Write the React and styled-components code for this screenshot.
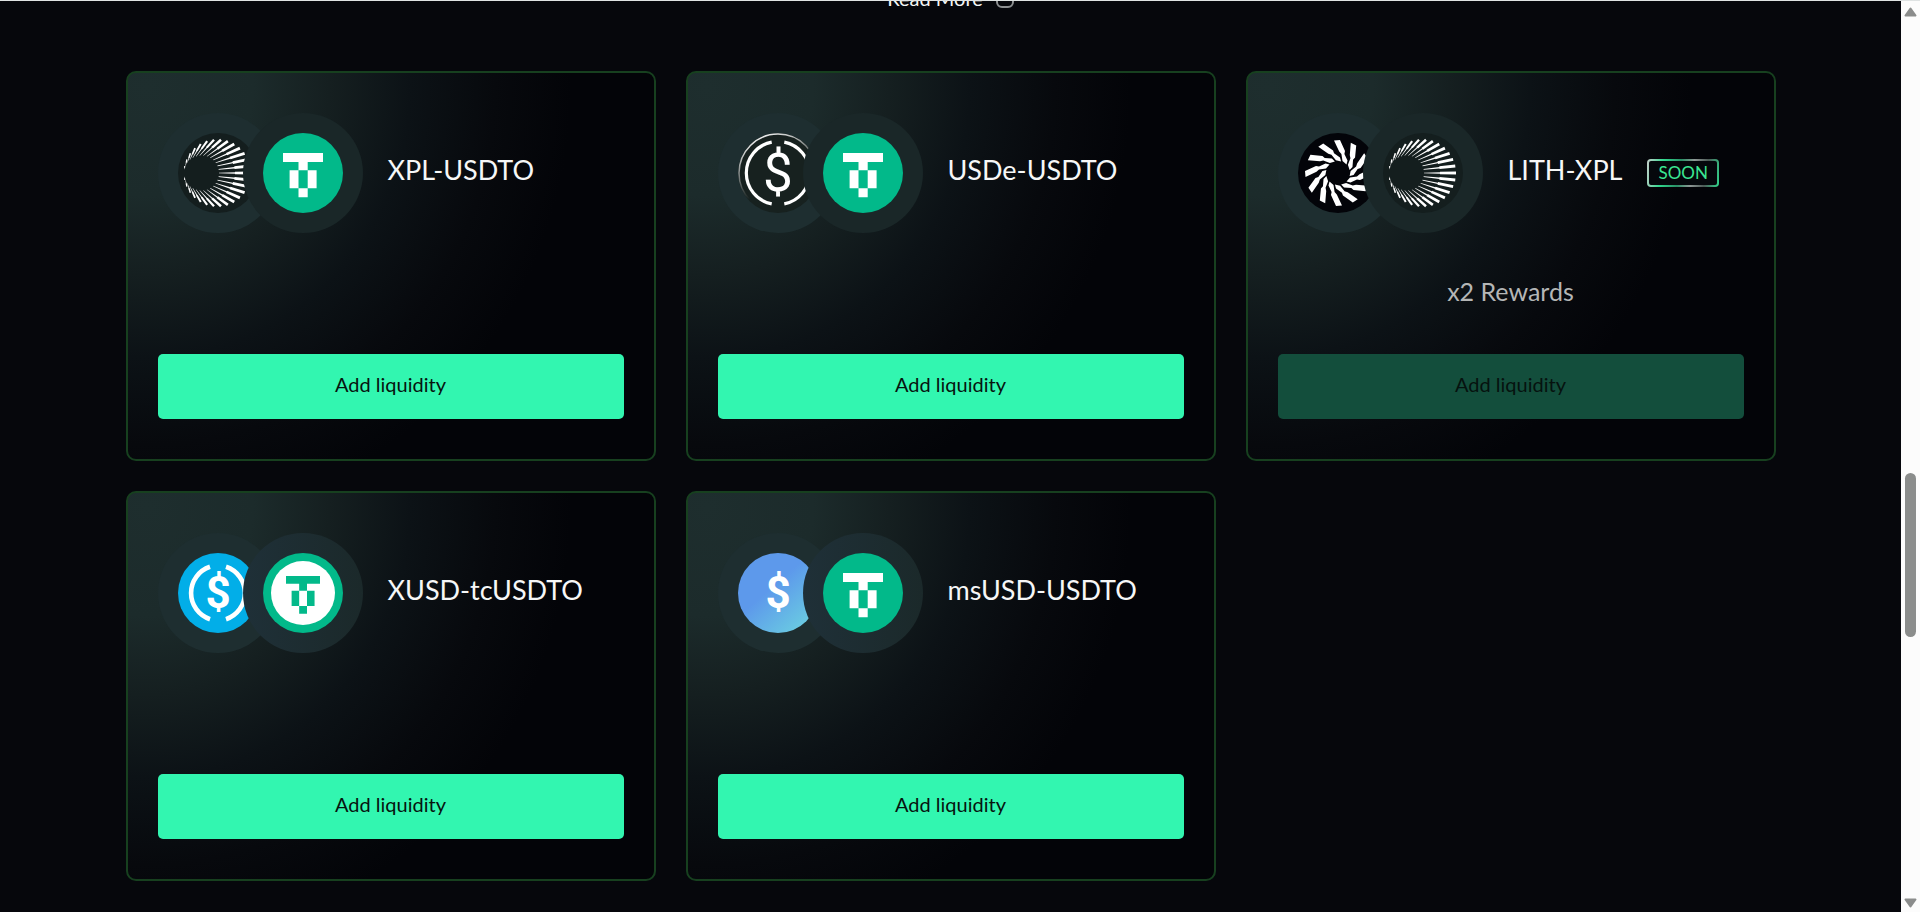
import React from "react";
import styled, { createGlobalStyle } from "styled-components";

const GlobalStyle = createGlobalStyle`
  * {
    box-sizing: border-box;
  }

  body {
    margin: 0;
    background: #06070c;
    color: #f6f7f7;
    font-family: Lato, "Open Sans", sans-serif;
  }
`;

const Screen = styled.div`
  display: grid;
  grid-template-columns: minmax(0, 1fr) 19px;
  height: 100vh;
  overflow: hidden;
  border-top: 1px solid #dfe3e3;
`;

const Content = styled.main`
  overflow: hidden;
  padding: 0 24px;
`;

const ReadMore = styled.a`
  display: flex;
  justify-content: center;
  align-items: center;
  gap: 13px;
  margin: -15px auto 60px;
  color: #f6f7f7;
  font-size: 20px;
  line-height: 25px;
  text-decoration: none;
`;

const PoolGrid = styled.section`
  display: grid;
  grid-template-columns: repeat(3, minmax(0, 1fr));
  gap: 30px;
  max-width: 1650px;
  margin: 0 auto;

  @media (max-width: 1500px) {
    grid-template-columns: repeat(2, minmax(0, 1fr));
  }

  @media (max-width: 1000px) {
    grid-template-columns: 1fr;
  }
`;

const Card = styled.article`
  display: flex;
  flex-direction: column;
  padding: 40px 30px;
  border: 2px solid #17401f;
  border-radius: 10px;
  background: radial-gradient(
      ellipse 80% 112% at 4% 4%,
      #1e2e2e 0%,
      #1c2b2b 25%,
      #151f20 43%,
      #0c1216 62%,
      #07090d 82%,
      #030408 100%
    )
    border-box;
`;

const CardHeader = styled.header`
  display: flex;
  align-items: center;
  gap: 25px;
`;

const TokenPair = styled.div`
  display: flex;
  flex-shrink: 0;
`;

const TokenRing = styled.div`
  display: flex;
  align-items: center;
  justify-content: center;
  width: 120px;
  height: 120px;
  border-radius: 50%;
  background: ${({ $tone }) => $tone};

  & + & {
    margin-left: -35px;
  }
`;

const PairName = styled.h3`
  margin: 0;
  padding-bottom: 6px;
  font-size: 27px;
  line-height: 34px;
  font-weight: 400;
  white-space: nowrap;
`;

const SoonBadge = styled.span`
  padding: 0 9px;
  border: 2px solid transparent;
  border-radius: 4px;
  background:
    linear-gradient(#05080c, #05080c) padding-box,
    linear-gradient(100deg, #c9cfcd 0%, #2fd98d 22%, #2a8f66 45%, #8f9896 62%, #4c5a56 80%, #2fd98d 100%) border-box;
  color: #3be793;
  font-size: 17px;
  line-height: 24px;
`;

const Rewards = styled.p`
  display: flex;
  align-items: center;
  justify-content: center;
  min-height: 121px;
  margin: 0;
  padding-bottom: 6px;
  color: #b4b6b6;
  font-size: 25px;
  line-height: 30px;
`;

const LiquidityButton = styled.button`
  height: 65px;
  padding: 0 20px 6px;
  border: 0;
  border-radius: 5px;
  background: #32f6b0;
  color: #07130f;
  font: 20px Lato, "Open Sans", sans-serif;
  cursor: pointer;

  &:disabled {
    background: #134e3c;
    color: #06120f;
    cursor: default;
  }
`;

const Scrollbar = styled.aside`
  display: flex;
  flex-direction: column;
  align-items: center;
  padding: 6px 0 4px;
  background: #fcfcfc;
`;

const ScrollArrow = styled.button`
  display: flex;
  padding: 0;
  border: 0;
  background: none;
`;

const Track = styled.div`
  display: grid;
  grid-template-rows: 457fr 164fr 262fr;
  flex: 1;
  width: 11px;
`;

const Thumb = styled.div`
  grid-row: 2;
  border-radius: 6px;
  background: #8b8d8c;
`;

const TokenSvg = ({ children }) => (
  <svg width="80" height="80" viewBox="0 0 80 80" aria-hidden="true">
    {children}
  </svg>
);

const RAYS = 30;

// each ray runs from the small left circle to the big outer one
const rays = Array.from({ length: RAYS }, (_, i) => {
  const a = (i * 2 * Math.PI) / RAYS;
  const x1 = 23.5 + 17.5 * Math.cos(a);
  const y1 = 40 + 17.5 * Math.sin(a);
  const x2 = 39.5 + 33.5 * Math.cos(a);
  const y2 = 40 + 33.5 * Math.sin(a);
  const length = Math.hypot(x2 - x1, y2 - y1) || 1;
  const nx = -(y2 - y1) / length;
  const ny = (x2 - x1) / length;
  const k = Math.min(1, 0.3 + length / 48);
  const at = (t, w) => `${x1 + (x2 - x1) * t + nx * w * k},${y1 + (y2 - y1) * t + ny * w * k}`;
  return [
    at(0, 0.3),
    at(0.5, 0.8),
    at(0.5, 1.4),
    at(1, 1.6),
    at(1, -1.6),
    at(0.5, -1.4),
    at(0.5, -0.8),
    at(0, -0.3),
  ].join(" ");
});

const XplIcon = () => (
  <TokenSvg>
    <circle cx="40" cy="40" r="40" fill="#141e1e" />
    {rays.map((points, i) => (
      <polygon key={i} points={points} fill="#fff" />
    ))}
  </TokenSvg>
);

const LithIcon = () => (
  <TokenSvg>
    <circle cx="40" cy="40" r="40" fill="#030409" />
    {Array.from({ length: 12 }, (_, i) => (
      <path
        key={i}
        d="M-4 -32.5L2 -33L7 -22L6.4 -19L9.5 -12.5L8.5 -8.5L4.5 -12L3.4 -19L1.2 -21.5Z"
        transform={`translate(40 40) rotate(${i * 30})`}
        fill="#fff"
      />
    ))}
  </TokenSvg>
);

const UsdtoMark = ({ color }) => (
  <path
    d="M20 20H60V29H44.7V37.3H53.6V55.3H44.7V64.3H35.5V55.3H26.6V37.3H35.5V29H20ZM35.5 37.3V55.3H44.7V37.3Z"
    fill={color}
    fillRule="evenodd"
  />
);

const UsdtoIcon = () => (
  <TokenSvg>
    <circle cx="40" cy="40" r="40" fill="#02b98a" />
    <UsdtoMark color="#fff" />
  </TokenSvg>
);

const TcUsdtoIcon = () => (
  <TokenSvg>
    <circle cx="40" cy="40" r="40" fill="#02b98a" />
    <circle cx="40" cy="40" r="32" fill="#fff" />
    <g transform="translate(6 6) scale(0.85)">
      <UsdtoMark color="#02b98a" />
    </g>
  </TokenSvg>
);

const Dollar = ({ size, y, weight }) => (
  <text
    x="40"
    y={y}
    fill="#fff"
    fontFamily="Roboto, sans-serif"
    fontSize={size}
    fontWeight={weight}
    textAnchor="middle"
  >
    $
  </text>
);

const UsdeIcon = () => (
  <TokenSvg>
    <defs>
      <linearGradient id="usde-rim" x1="0.2" y1="0" x2="0.6" y2="0.9">
        <stop offset="0" stopColor="#fff" />
        <stop offset="0.75" stopColor="#fff" stopOpacity="0" />
      </linearGradient>
    </defs>
    <circle cx="40" cy="40" r="40" fill="#17211f" />
    <circle cx="40" cy="40" r="39" fill="none" stroke="url(#usde-rim)" strokeWidth="1.5" />
    <path
      d="M33.7 9.1A31.5 31.5 0 0 0 33.7 70.9M46.3 9.1A31.5 31.5 0 0 1 46.3 70.9"
      fill="none"
      stroke="#fff"
      strokeWidth="3.2"
    />
    <Dollar size={53} y={58} weight={400} />
  </TokenSvg>
);

const XusdIcon = () => (
  <TokenSvg>
    <circle cx="40" cy="40" r="40" fill="#02aee8" />
    <path
      d="M32 13.8A27.6 27.6 0 0 0 32 66.2M48 13.8A27.6 27.6 0 0 1 48 66.2"
      fill="none"
      stroke="#fff"
      strokeWidth="4.6"
    />
    <Dollar size={44} y={55} weight={700} />
  </TokenSvg>
);

const MsUsdIcon = () => (
  <TokenSvg>
    <defs>
      <linearGradient id="msusd-fill" x1="0.15" y1="0.1" x2="0.85" y2="0.9">
        <stop offset="0.4" stopColor="#5d99eb" />
        <stop offset="1" stopColor="#6acbe2" />
      </linearGradient>
    </defs>
    <circle cx="40" cy="40" r="40" fill="url(#msusd-fill)" />
    <Dollar size={44} y={55} weight={700} />
  </TokenSvg>
);

const LIGHT = "linear-gradient(90deg, #1f3038, #1b292a)";
const BASE = "#1e2e30";
const DIM = "#1a2728";

const pools = [
  { name: "XPL-USDTO", icons: [XplIcon, UsdtoIcon], tones: [BASE, DIM] },
  { name: "USDe-USDTO", icons: [UsdeIcon, UsdtoIcon], tones: [BASE, DIM] },
  { name: "LITH-XPL", icons: [LithIcon, XplIcon], tones: [BASE, DIM], soon: true, rewards: "x2 Rewards" },
  { name: "XUSD-tcUSDTO", icons: [XusdIcon, TcUsdtoIcon], tones: [BASE, LIGHT] },
  { name: "msUSD-USDTO", icons: [MsUsdIcon, UsdtoIcon], tones: [BASE, LIGHT] },
];

const PoolCard = ({ pool }) => (
  <Card>
    <CardHeader>
      <TokenPair>
        {pool.icons.map((Icon, i) => (
          <TokenRing key={i} $tone={pool.tones[i]}>
            <Icon />
          </TokenRing>
        ))}
      </TokenPair>
      <PairName>{pool.name}</PairName>
      {pool.soon && <SoonBadge>SOON</SoonBadge>}
    </CardHeader>
    <Rewards>{pool.rewards}</Rewards>
    <LiquidityButton type="button" disabled={pool.soon}>
      Add liquidity
    </LiquidityButton>
  </Card>
);

const App = () => {
  return (
    <>
      <GlobalStyle />
      <Screen>
        <Content>
          <ReadMore href="#more">
            Read More
            <svg width="18" height="18" viewBox="0 0 18 18" aria-hidden="true">
              <rect x="1" y="1" width="16" height="16" rx="5" fill="none" stroke="#8d9092" strokeWidth="2" />
            </svg>
          </ReadMore>
          <PoolGrid>
            {pools.map((pool) => (
              <PoolCard key={pool.name} pool={pool} />
            ))}
          </PoolGrid>
        </Content>
        <Scrollbar>
          <ScrollArrow type="button" aria-label="Scroll up">
            <svg width="13" height="10" viewBox="0 0 13 10">
              <path d="M6.5 1.5L11.5 8.5H1.5Z" fill="#8b8d8c" stroke="#8b8d8c" strokeWidth="2" strokeLinejoin="round" />
            </svg>
          </ScrollArrow>
          <Track>
            <Thumb />
          </Track>
          <ScrollArrow type="button" aria-label="Scroll down">
            <svg width="13" height="10" viewBox="0 0 13 10">
              <path d="M6.5 8.5L11.5 1.5H1.5Z" fill="#8b8d8c" stroke="#8b8d8c" strokeWidth="2" strokeLinejoin="round" />
            </svg>
          </ScrollArrow>
        </Scrollbar>
      </Screen>
    </>
  );
};

export default App;
